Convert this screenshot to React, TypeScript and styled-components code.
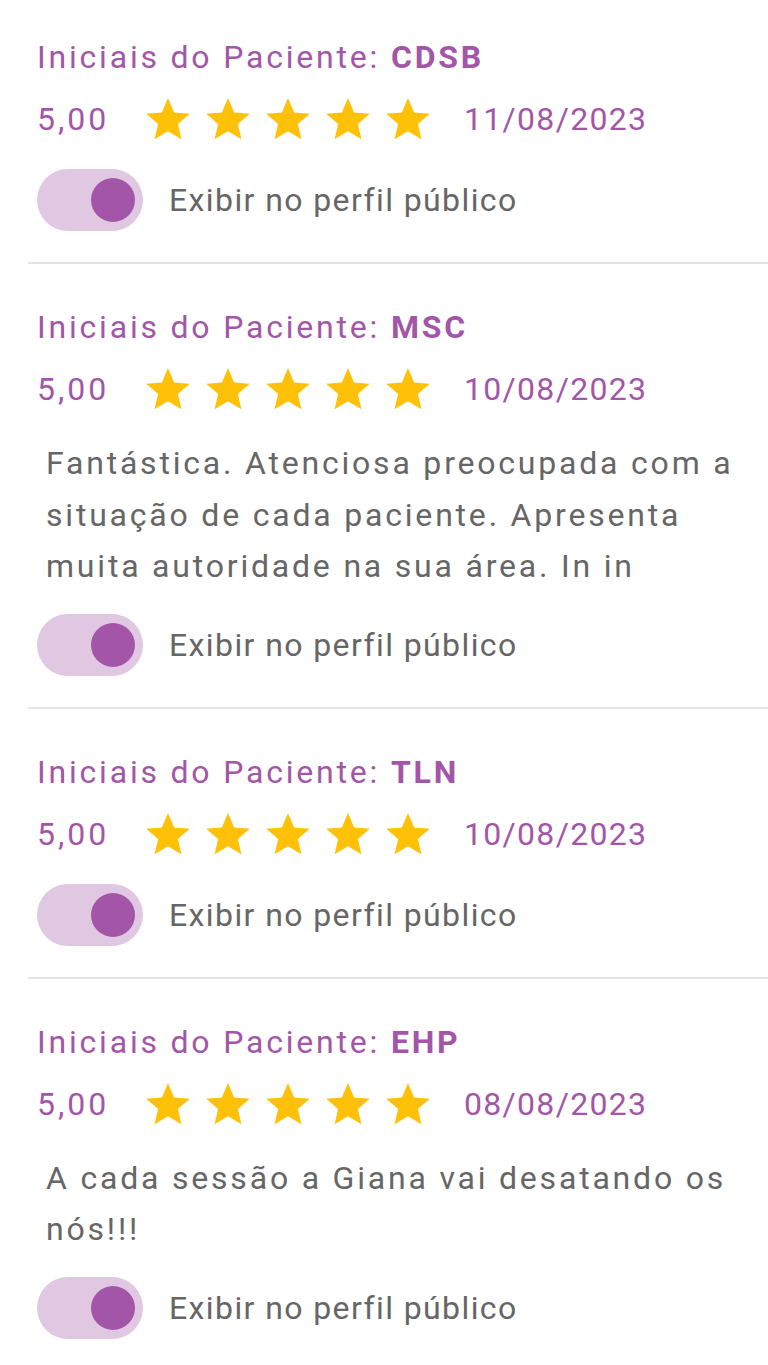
import React from 'react';
import styled, {createGlobalStyle} from "styled-components";

const GlobalStyle = createGlobalStyle`
  html, body {
    margin: 0;
    padding: 0;
    background: #FFFFFF;
  }
  body {
    font-family: Roboto, "Noto Sans", sans-serif;
  }
`;

const List = styled.div`
  margin-left: 28px;
`;

const Item = styled.div`
  display: flex;
  flex-direction: column;
  padding: 35px 0 31px 9px;
  border-bottom: 2px solid #E4E4E4;

  & + & {
    padding-top: 41px;
  }
`;

const Title = styled.div`
  height: 40px;
  line-height: 44px;
  font-size: 32px;
  color: #A356A8;
  letter-spacing: 2.8px;
`;

const Initials = styled.b`
  font-weight: 700;
`;

const RatingRow = styled.div`
  display: flex;
  align-items: center;
  height: 44px;
  margin-top: 22px;
  font-size: 32px;
  line-height: 46px;
  color: #A356A8;
  letter-spacing: 1.3px;
`;

const RatingValue = styled.span`
  min-width: 74px;
  letter-spacing: 3px;
`;

const Stars = styled.div`
  display: flex;
  align-items: center;
  gap: 16px;
  margin: 0 34px 0 35px;
`;

const Comment = styled.div`
  margin: 27px 0 -7px 9px;
  padding-right: 16px;
  font-size: 32px;
  line-height: 51.5px;
  color: #666666;
  letter-spacing: 2.8px;
`;

const ToggleRow = styled.div`
  display: flex;
  align-items: center;
  margin-top: 28px;
`;

const Track = styled.div<{on: boolean}>`
  display: flex;
  align-items: center;
  justify-content: ${p => p.on ? 'flex-end' : 'flex-start'};
  box-sizing: border-box;
  width: 106px;
  height: 62px;
  padding: 0 8px;
  border-radius: 31px;
  background: #E0C8E3;
`;

const Knob = styled.span`
  width: 44px;
  height: 44px;
  border-radius: 50%;
  background: #A356A8;
`;

const ToggleLabel = styled.span`
  margin-left: 26px;
  font-size: 32px;
  line-height: 46px;
  color: #666666;
  letter-spacing: 1.4px;
`;

const Star: React.FC = () => (
    <svg width="44" height="42" viewBox="2 2 20 19.3">
        <path fill="#FFC107" d="M12 17.27L18.18 21l-1.64-7.03L22 9.24l-7.19-.61L12 2 9.19 8.63 2 9.24l5.46 4.73L5.82 21z"/>
    </svg>
);

interface Review {
    initials: string;
    rating: string;
    date: string;
    comment?: string;
}

const reviews: Review[] = [
    {initials: 'CDSB', rating: '5,00', date: '11/08/2023'},
    {
        initials: 'MSC',
        rating: '5,00',
        date: '10/08/2023',
        comment: 'Fantástica. Atenciosa preocupada com a situação de cada paciente. Apresenta muita autoridade na sua área. In in',
    },
    {initials: 'TLN', rating: '5,00', date: '10/08/2023'},
    {initials: 'EHP', rating: '5,00', date: '08/08/2023', comment: 'A cada sessão a Giana vai desatando os nós!!!'},
];

const App: React.FC = () => {
    return (
        <>
            <GlobalStyle/>
            <List>
                {reviews.map((review, index) => (
                    <Item key={index}>
                        <Title>Iniciais do Paciente: <Initials>{review.initials}</Initials></Title>
                        <RatingRow>
                            <RatingValue>{review.rating}</RatingValue>
                            <Stars>
                                {[0, 1, 2, 3, 4].map(i => <Star key={i}/>)}
                            </Stars>
                            <span>{review.date}</span>
                        </RatingRow>
                        {review.comment && <Comment>{review.comment}</Comment>}
                        <ToggleRow>
                            <Track on={true}><Knob/></Track>
                            <ToggleLabel>Exibir no perfil público</ToggleLabel>
                        </ToggleRow>
                    </Item>
                ))}
            </List>
        </>
    );
};

export default App;
